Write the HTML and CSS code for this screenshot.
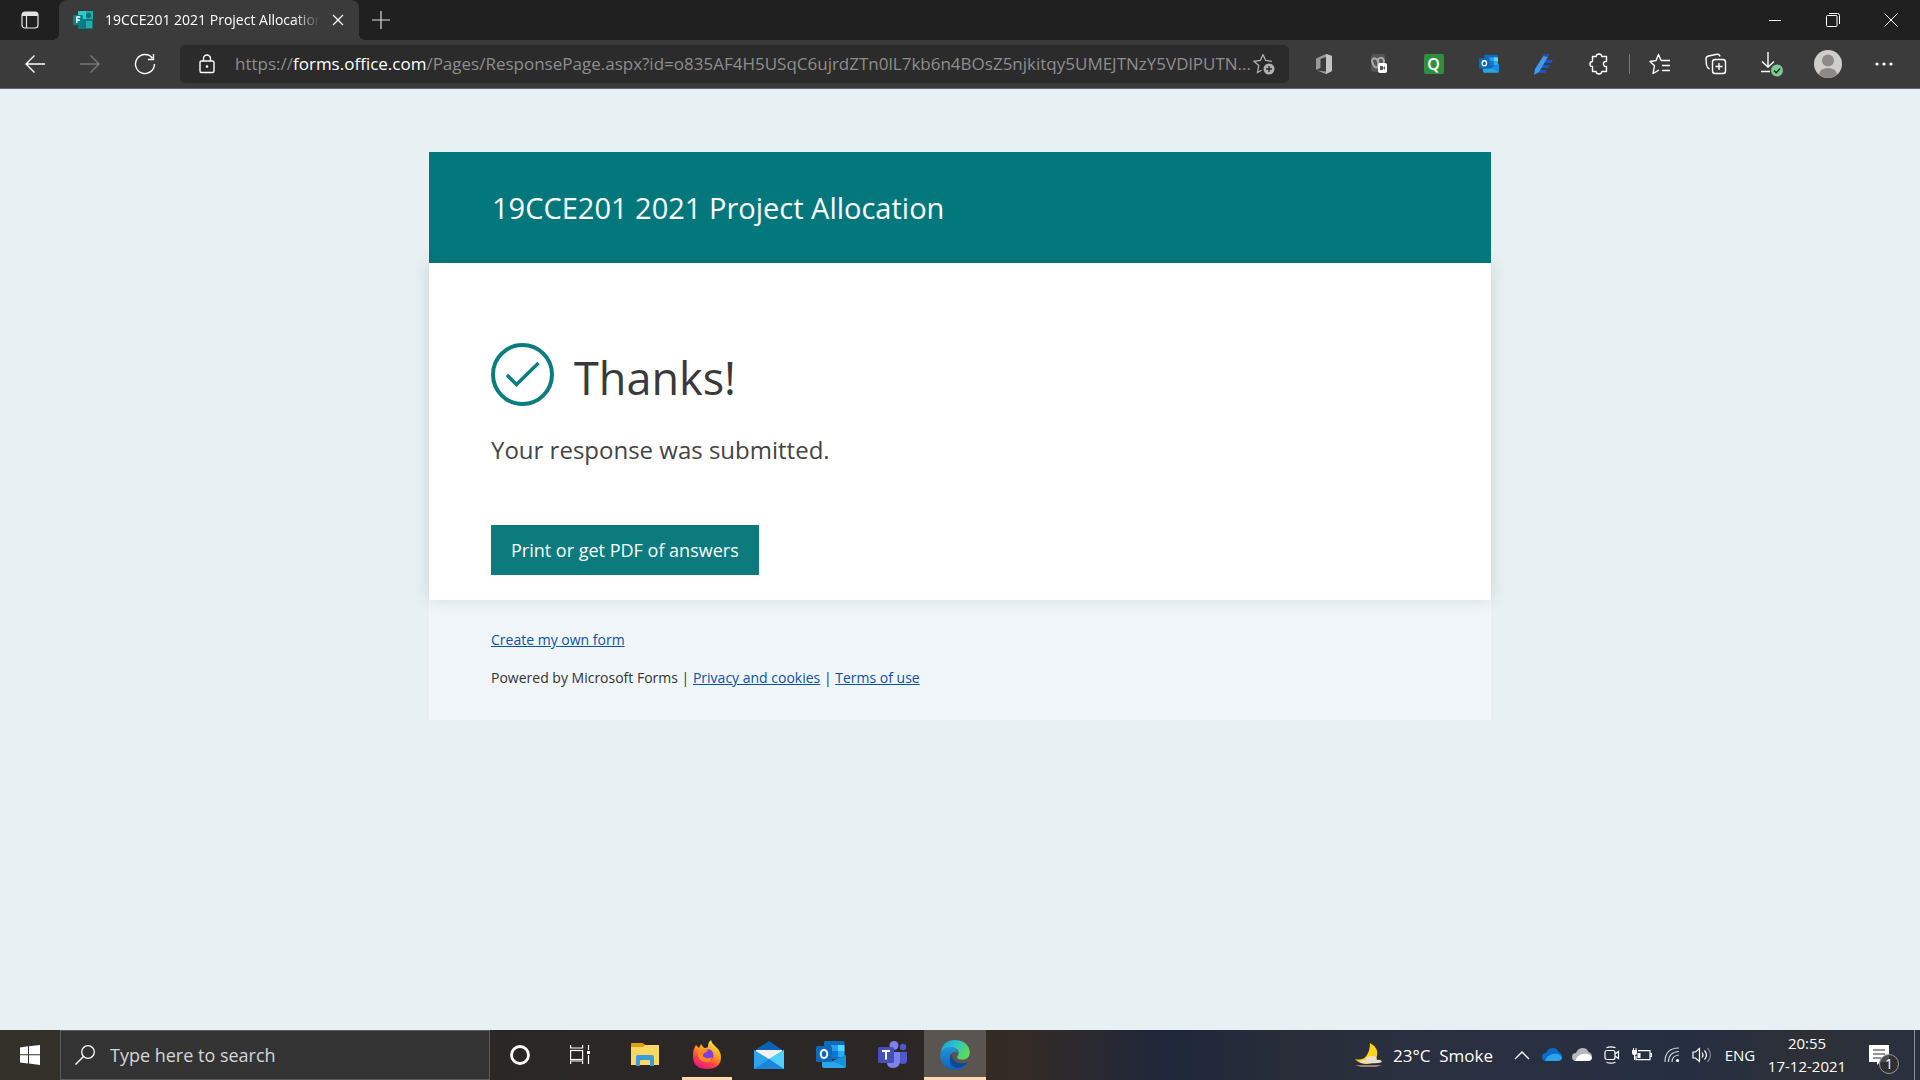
FILE: index.html
```html
<!DOCTYPE html>
<html lang="en">
<head>
<meta charset="utf-8">
<title>19CCE201 2021 Project Allocation</title>
<link rel="stylesheet" href="styles.css">
</head>
<body>
<header class="browser">
  <div class="tabstrip">
    <button class="tab-actions" aria-label="Tab actions">
      <svg width="20" height="20" viewBox="0 0 20 20"><rect x="2" y="2" width="16" height="16" rx="3" fill="none" stroke="#e4e4e4" stroke-width="1.2"/><path d="M2 6V4.500Q2 2 4.500 2h11Q18 2 18 4.500V6z" fill="#e4e4e4"/><path d="M6.500 6v12" stroke="#e4e4e4" stroke-width="1.200"/></svg>
    </button>
    <div class="tab">
      <svg width="20" height="20" viewBox="0 0 20 20"><path d="M5 2q0-1 1-1h14v8H5z" fill="#37c6d0"/><path d="M13 1h7v9h-7z" fill="#1fa8b0"/><circle cx="15.500" cy="5.500" r="2.500" fill="#0b6b70"/><path d="M5 9h15v10H6q-1 0-1-1z" fill="#0a7c80"/><path d="M13 11h6v7h-6z" fill="#29a8b0"/><rect y="5" width="10" height="10" rx="1" fill="#038387"/><path d="M3.800 13V7h3.500M3.800 10h3" stroke="#fff" stroke-width="1.400" fill="none"/></svg>
      <span class="tab-title">19CCE201 2021 Project Allocation</span>
      <button class="tab-close" aria-label="Close tab"><svg width="12" height="12" viewBox="0 0 12 12"><path d="M1 1l10 10M11 1L1 11" stroke="#fff" stroke-width="1.200"/></svg></button>
    </div>
    <button class="new-tab" aria-label="New tab"><svg width="18" height="18" viewBox="0 0 18 18"><path d="M9 0v18M0 9h18" stroke="#ddd" stroke-width="1.200"/></svg></button>
    <div class="window-controls">
      <button aria-label="Minimise"><svg width="14" height="14" viewBox="0 0 14 14"><path d="M1 7.500h12" stroke="#fff"/></svg></button>
      <button aria-label="Restore"><svg width="14" height="14" viewBox="0 0 14 14" fill="none" stroke="#fff"><rect x=".5" y="2.500" width="10.500" height="11" rx="1"/><path d="M3 .5h8.500q2 0 2 2V11"/></svg></button>
      <button aria-label="Close"><svg width="14" height="14" viewBox="0 0 14 14"><path d="M.5.5l13 13M13.500.5l-13 13" stroke="#fff"/></svg></button>
    </div>
  </div>
  <div class="toolbar">
    <div class="nav-buttons">
      <button aria-label="Back"><svg width="22" height="20" viewBox="0 0 22 20"><path d="M21 10H2M10.500 1.500L2 10l8.500 8.500" fill="none" stroke="#fff" stroke-width="1.400"/></svg></button>
      <button aria-label="Forward" disabled><svg width="22" height="20" viewBox="0 0 22 20"><path d="M1 10h19M11.500 1.500L20 10l-8.500 8.500" fill="none" stroke="#777" stroke-width="1.400"/></svg></button>
      <button aria-label="Refresh"><svg width="22" height="22" viewBox="0 0 22 22"><path d="M20.500 11A9.500 9.500 0 1 1 18.500 5.200M19.500 1v5.500H14" fill="none" stroke="#fff" stroke-width="1.400"/></svg></button>
    </div>
    <div class="address">
      <svg width="18" height="20" viewBox="0 0 18 20"><rect x="2" y="7" width="14" height="11.500" rx="1.500" fill="none" stroke="#fff" stroke-width="1.400"/><path d="M5.500 7V4.500a3.500 3.500 0 0 1 7 0V7" fill="none" stroke="#fff" stroke-width="1.400"/><circle cx="9" cy="12.500" r="1.300" fill="#fff"/></svg>
      <div class="url" role="textbox" aria-label="Address bar">https://<span class="host">forms.office.com</span>/Pages/ResponsePage.aspx?id=o835AF4H5USqC6ujrdZTn0lL7kb6n4BOsZ5njkitqy5UMEJTNzY5VDlPUTN...</div>
      <button class="favourite" aria-label="Add to favourites"><svg width="22" height="22" viewBox="0 0 22 22"><path d="M10 1.500l2.700 6 6.300.8M10 1.500l-2.600 6-6.400.8 4.700 4.300-1.200 7 4-2.300" fill="none" stroke="#b0b0b0" stroke-width="1.300"/><circle cx="16" cy="16" r="5.500" fill="#b0b0b0"/><path d="M16 13v6M13 16h6" stroke="#2b2b2b" stroke-width="1.400"/></svg></button>
    </div>
    <div class="extensions">
      <button aria-label="Office"><svg width="18" height="22" viewBox="0 0 18 22"><path d="M1 5.500L11 1l6 2v15l-6 3-9-3.500 9 1V4L5.500 6v9L1 17z" fill="#999"/><path d="M11 1l6 2v15l-6 3z" fill="#c4c4c4"/></svg></button>
      <button aria-label="Extension"><svg width="20" height="20" viewBox="0 0 20 20"><rect x="2" y="0" width="14" height="18" rx="3" fill="#555"/><path d="M3 7q1-4 4-2t2 8q-4 2-6-6zM9 5q5-3 6 2l-2 6q-4-2-4-8z" fill="none" stroke="#aaa" stroke-width="2"/><rect x="9" y="9" width="9" height="10" rx="2" fill="#fff"/><path d="M11 12h3v4h-3zM14 14l2-2v4z" fill="#555"/></svg></button>
      <button class="ext-q" aria-label="Q extension"><span>Q</span></button>
      <button aria-label="Outlook"><svg width="20" height="20" viewBox="0 0 30 28"><use href="#outlook"/></svg></button>
      <button aria-label="Editor"><svg width="20" height="22" viewBox="0 0 20 22"><path d="M9 7h10l-2 3H8zM7 12h9l-2 3H6zM5 17h8l-2 3H4z" fill="#1b55c4"/><path d="M10 2q2-2 5 0L5 19l-5 3 1-6z" fill="#3f9bf0"/><path d="M10 2q2-2 5 0l-1 2-5-1z" fill="#1b4fa8"/></svg></button>
      <button aria-label="Extensions"><svg width="22" height="22" viewBox="0 0 22 22"><path d="M4.500 3.500h3.500Q8.500 1 11 1t3 2.500h4.500v5Q15.500 8 15.500 11t3 2.500v5H14Q13.500 21 11 21t-3-2.500H4.500v-5Q2 13.500 2 11t2.500-2.500z" fill="none" stroke="#fff" stroke-width="1.400" stroke-linejoin="round"/></svg></button>
    </div>
    <div class="browser-actions">
      <button aria-label="Favourites"><svg width="22" height="22" viewBox="0 0 22 22"><path d="M12 7.500L9.500 1.500 7 7.500l-6 1 4.500 4.300L4 20.500l6-3.500M12 7.500h9M13 12.500h8M13 17.500h8" fill="none" stroke="#fff" stroke-width="1.400" stroke-linejoin="round"/></svg></button>
      <button aria-label="Collections"><svg width="22" height="22" viewBox="0 0 22 22"><g fill="none" stroke="#fff" stroke-width="1.400"><rect x="7.500" y="6.500" width="13" height="14" rx="2.500"/><path d="M14 10v7M10.500 13.500h7M4.500 16Q2 15 1.500 12L1 6q0-2.500 2.500-3L12 1.300q2.500-.3 3 2.200"/></g></svg></button>
      <button aria-label="Downloads"><svg width="24" height="26" viewBox="0 0 24 26"><path d="M8 1v15M2 10.500L8 16l6-5.500M1 20.500h9" fill="none" stroke="#fff" stroke-width="1.400"/><circle cx="17" cy="19.500" r="6" fill="#7ccb94"/><path d="M14 19.500l2.200 2.200 4-4.200" fill="none" stroke="#222" stroke-width="1.300"/></svg></button>
      <button aria-label="Profile"><svg width="28" height="28" viewBox="0 0 28 28"><circle cx="14" cy="14" r="14" fill="#d0cecb"/><circle cx="14" cy="10.500" r="6" fill="#8d8986"/><path d="M5 24.500q1-6.500 9-6.500t9 6.500Q19 28 14 28t-9-3.500z" fill="#8d8986"/></svg></button>
      <button aria-label="Settings and more"><svg width="18" height="4" viewBox="0 0 18 4" fill="#fff"><circle cx="2" cy="2" r="1.600"/><circle cx="9" cy="2" r="1.600"/><circle cx="16" cy="2" r="1.600"/></svg></button>
    </div>
  </div>
</header>

<main class="page">
  <section class="form">
    <header class="form-header"><h1>19CCE201 2021 Project Allocation</h1></header>
    <div class="form-body">
      <div class="thanks">
        <svg width="63" height="63" viewBox="0 0 63 63" fill="none" stroke="#0b7c7f"><circle cx="31.500" cy="31.500" r="29.500" stroke-width="4"/><path d="M16 32l9.500 9.500L47.500 20" stroke-width="3.500"/></svg>
        <h2>Thanks!</h2>
      </div>
      <p class="message">Your response was submitted.</p>
      <button class="print">Print or get PDF of answers</button>
    </div>
    <footer class="form-footer">
      <p><a href="#">Create my own form</a></p>
      <p>Powered by Microsoft Forms | <a href="#">Privacy and cookies</a> | <a href="#">Terms of use</a></p>
    </footer>
  </section>
</main>

<footer class="taskbar">
  <button class="start" aria-label="Start"><svg width="20" height="20" viewBox="0 0 20 20" fill="#fff"><path d="M0 2.500L8 1.300V9.300H0zM9 1.200L20 0v9.300H9zM0 10.300h8v8.200L0 17.400zM9 10.300h11V20L9 18.600z"/></svg></button>
  <label class="search">
    <svg width="20" height="20" viewBox="0 0 20 20"><circle cx="13" cy="7" r="6.300" fill="none" stroke="#fff" stroke-width="1.300"/><path d="M8.500 11.500L.5 19.500" stroke="#fff" stroke-width="1.400"/></svg>
    <input type="text" placeholder="Type here to search" aria-label="Type here to search">
  </label>
  <div class="shell-buttons">
    <button aria-label="Cortana"><svg width="20" height="20" viewBox="0 0 20 20"><circle cx="10" cy="10" r="8.500" fill="none" stroke="#fff" stroke-width="2.800"/></svg></button>
    <button aria-label="Task view"><svg width="20" height="20" viewBox="0 0 20 20" fill="none" stroke="#fff" stroke-width="1.200"><rect x=".6" y="5.500" width="12" height="9"/><path d="M.6 0v3h12V0M.6 19v-3h12v3M18.500 0v5M18.500 10v9"/><path d="M17 6h3v3h-3z" fill="#fff" stroke="none"/></svg></button>
  </div>
  <div class="apps">
    <button aria-label="File Explorer"><svg width="28" height="24" viewBox="0 0 28 24"><path d="M0 1q0-1 1-1h11l2 2h13q1 0 1 1v8H0z" fill="#e0a000"/><path d="M0 4h12l2-2h13q1 0 1 1v19H0z" fill="#ffd765"/><path d="M5 23V14q0-2 2-2h14q2 0 2 2v9h-4v-5q0-1-1-1h-8q-1 0-1 1v5z" fill="#3c9ade"/></svg></button>
    <button class="running" aria-label="Firefox"><svg width="30" height="30" viewBox="0 0 30 30"><defs><linearGradient id="fire" x1=".8" y1="0" x2=".3" y2="1"><stop stop-color="#fff14a"/><stop offset=".45" stop-color="#ff9a20"/><stop offset=".75" stop-color="#ff3b4c"/><stop offset="1" stop-color="#e31587"/></linearGradient></defs><path d="M4 5l3 3 2-4 3 4q3 0 4-1 0-5 3-7 1 4 3 5l1 1q6 5 6 11 0 12-14 12Q1 29 1 16 1 9 4 5z" fill="url(#fire)"/><circle cx="15.500" cy="15" r="6" fill="#7f3fe0"/><path d="M5 12q3-3 7-2l4-1q0 3-4 4-3 4 2 5 4 1 6-1-1 6-7 5-7-1-8-10z" fill="#ff8a22"/></svg></button>
    <button aria-label="Mail"><svg width="30" height="28" viewBox="0 0 30 28"><path d="M0 10L15 0l15 10v4H0z" fill="#0b62b4"/><path d="M2 9h26v10H2z" fill="#f2f2f2"/><path d="M0 9l15 9L30 9v19H0z" fill="#2ca5e8"/><path d="M30 9v19L15 18z" fill="#4fd0fb"/><path d="M0 28l15-10 15 10z" fill="#1d86dc"/></svg></button>
    <button aria-label="Outlook"><svg width="30" height="28" viewBox="0 0 30 28"><g id="outlook"><path d="M8 1.500Q8 0 9.500 0H27q1.500 0 1.500 1.500V18H8z" fill="#0f6cbd"/><path d="M15 4h7v6h-7z" fill="#2a9de8"/><path d="M22 4h6.500v6H22z" fill="#50d9ff"/><path d="M15 10h7v6h-7z" fill="#0a78d4"/><path d="M22 10h6.500v6H22z" fill="#29a9ee"/><path d="M6 15l12 6 12-6v10q0 2-2 2H8q-2 0-2-2z" fill="#28a8ea"/><path d="M30 14v12L16 20z" fill="#1490df"/><rect y="5" width="16" height="16" rx="1.500" fill="#0f67b8"/><ellipse cx="8" cy="13" rx="3.300" ry="3.900" fill="none" stroke="#fff" stroke-width="2"/></g></svg></button>
    <button aria-label="Teams"><svg width="30" height="28" viewBox="0 0 30 28"><circle cx="25" cy="6" r="3.200" fill="#5059c9"/><path d="M20 11h9v8q0 4-4 4t-5-4z" fill="#5059c9"/><circle cx="16" cy="4.500" r="4.500" fill="#7b83eb"/><path d="M9 11h13v9q0 7-7 7t-6-7z" fill="#7b83eb"/><rect y="6" width="16" height="16" rx="1.500" fill="#454fb8"/><path d="M4 10h8M8 10v8.500" stroke="#fff" stroke-width="2"/></svg></button>
    <button class="active" aria-label="Microsoft Edge"><svg width="30" height="30" viewBox="0 0 30 30"><defs><linearGradient id="wave" x1="0" y1=".2" x2="1" y2=".6"><stop stop-color="#1aa3de"/><stop offset=".5" stop-color="#2fc6c4"/><stop offset="1" stop-color="#62dd4c"/></linearGradient><linearGradient id="sea" x1="0" y1="0" x2="0" y2="1"><stop stop-color="#2195dc"/><stop offset="1" stop-color="#0f62b8"/></linearGradient></defs><path d="M1 12Q3 0 15 0q9 0 13.500 7 3 7-1 11-4 3-9 1-2-1-1-3 3-4-1-7Q10 5 1 12z" fill="url(#wave)"/><path d="M0 15Q2 7 10 7q7 0 8 6-5-3-8 2-2 6 4 9 6 3 14-2-4 8-13 8Q1 29 0 15z" fill="url(#sea)"/><path d="M11 14q-4 12 6 14 6 0 11-6-14 5-17-8z" fill="#0b4a96"/></svg></button>
  </div>
  <div class="tray">
    <button class="weather"><svg width="30" height="26" viewBox="0 0 30 26"><path d="M16 1q9 5 7 13-2 9-12 8-7-1-10-5 8 2 12-4 3-5 3-12z" fill="#ffd21c"/><path d="M6 21q1-4 5-3 2-4 7-4 5 0 5 4 4-1 5 2-3 2-22 1z" fill="#eadfce"/><path d="M1 23h27l-6 2H7z" fill="#9a8170"/></svg><span>23°C&nbsp; Smoke</span></button>
    <div class="tray-icons">
      <button aria-label="Show hidden icons"><svg width="16" height="10" viewBox="0 0 16 10"><path d="M1 9l7-7 7 7" fill="none" stroke="#fff" stroke-width="1.400"/></svg></button>
      <button aria-label="OneDrive work"><svg width="20" height="14" viewBox="0 0 20 14"><path d="M4 5q2-5 7-5 4 0 5.500 4Q20 5 20 9t-4 4H4Q0 13 0 9t4-4z" fill="#0a6cc8"/><path d="M3 13q2-6 8-7 7-1 9 4-1 3-4 3z" fill="#2aa5ea"/></svg></button>
      <button aria-label="OneDrive"><svg width="20" height="14" viewBox="0 0 20 14"><path d="M4 5q2-5 7-5 4 0 5.500 4Q20 5 20 9t-4 4H4Q0 13 0 9t4-4z" fill="#b5b7bb"/><path d="M3 13q2-6 8-7 7-1 9 4-1 3-4 3z" fill="#fff"/></svg></button>
      <button aria-label="Meet Now"><svg width="16" height="18" viewBox="0 0 16 18" fill="none" stroke="#fff" stroke-width="1.200"><rect x="1" y="4.500" width="10" height="9" rx="2"/><path d="M11 8l3.500-2.500v7L11 10M2.500 1.800q4.500-2 9 0M2.500 16.200q4.500 2 9 0"/></svg></button>
      <button aria-label="Battery"><svg width="20" height="14" viewBox="0 0 20 14"><path d="M6 2.600h12v9H4V8M18.500 5.500h1v3h-1" fill="none" stroke="#fff" stroke-width="1.200"/><path d="M5.500 5h3v5h-3zM0 2h5v3q0 2-2 2H2Q0 7 0 5zM1 0h1v2H1zM3.500 0h1v2h-1zM2 7h1.200v5H2z" fill="#fff"/></svg></button>
      <button aria-label="Wi-Fi"><svg width="16" height="16" viewBox="0 0 16 16" fill="none" stroke="#ccd0d6" stroke-width="1.200"><path d="M1 15Q1 1 15 1M4.500 15q0-10 10.500-10.500M8 15q0-6.500 7-7"/><circle cx="13.500" cy="13.500" r="1.600" fill="#fff" stroke="none"/></svg></button>
      <button aria-label="Volume"><svg width="20" height="18" viewBox="0 0 20 18" fill="none" stroke="#fff" stroke-width="1.200"><path d="M1 6h2.500L7.500 2.500v13L3.500 12H1zM10 6.500q2 2.500 0 5M12.500 4.500q4 4.500 0 9"/><path d="M15.500 2q6 7 0 14" stroke="#7c828e"/></svg></button>
    </div>
    <button class="lang">ENG</button>
    <button class="clock"><span>20:55</span><span>17-12-2021</span></button>
    <button class="notifications" aria-label="1 new notification"><svg width="20" height="20" viewBox="0 0 20 20"><path d="M0 0h20v17h-9l-3 3v-3H0z" fill="#fff"/><path d="M4 5h12M4 9h12M4 13h8" stroke="#2a3040" stroke-width="1.200"/></svg><span class="badge">1</span></button>
    <button class="show-desktop" aria-label="Show desktop"></button>
  </div>
</footer>
</body>
</html>
```
FILE: styles.css
```css
* { box-sizing: border-box; }
body {
  margin: 0;
  min-height: 100vh;
  display: flex;
  flex-direction: column;
  font-family: "Open Sans", "Noto Sans", sans-serif;
  background: #e7f0f3;
}
h1, h2, p { margin: 0; font-weight: 400; }
button {
  display: flex;
  align-items: center;
  justify-content: center;
  padding: 0;
  border: 0;
  background: none;
  color: #fff;
  font: inherit;
}
svg { display: block; flex: none; }

/* Browser window */
.tabstrip { display: flex; height: 40px; background: #202020; }
.tab-actions { width: 59px; }
.tab {
  position: relative;
  display: flex;
  align-items: center;
  width: 300px;
  padding: 0 15px 0 14px;
  border-radius: 8px 8px 0 0;
  background: #3b3b3b;
}
.tab::before, .tab::after {
  content: "";
  position: absolute;
  bottom: 0;
  width: 6px;
  height: 6px;
}
.tab::before { left: -6px; background: radial-gradient(circle at 0 0, #202020 6px, #3b3b3b 6px); }
.tab::after { right: -6px; background: radial-gradient(circle at 100% 0, #202020 6px, #3b3b3b 6px); }
.tab-title {
  flex: 1;
  margin: 0 12px;
  padding-bottom: 2px;
  overflow: hidden;
  white-space: nowrap;
  color: #fff;
  font-size: 14px;
  mask-image: linear-gradient(to right, #000 88%, transparent);
}
.tab-close { width: 12px; }
.new-tab { width: 44px; }
.window-controls { display: flex; margin-left: auto; }
.window-controls button { width: 58px; }
.toolbar {
  display: flex;
  align-items: center;
  height: 49px;
  padding: 0 8px 0 7px;
  border-bottom: 1px solid #666;
  background: #3b3b3b;
}
.nav-buttons, .extensions, .browser-actions { display: flex; }
.nav-buttons button, .extensions button { width: 55px; height: 38px; }
.address {
  flex: 1;
  min-width: 0;
  display: flex;
  align-items: center;
  height: 38px;
  margin: 0 7px 0 8px;
  padding: 0 14px 0 18px;
  border-radius: 5px;
  background: #2b2b2b;
}
.url {
  flex: 1;
  min-width: 0;
  margin-left: 19px;
  padding-bottom: 2px;
  overflow: hidden;
  white-space: nowrap;
  color: #8e8e8e;
  font-size: 17px;
}
.host { color: #fff; }
.ext-q span {
  width: 20px;
  height: 20px;
  background: #2f8f3f;
  border-radius: 2px;
  font-size: 16px;
  line-height: 20px;
  font-weight: 600;
}
.browser-actions { margin-left: 3px; padding-left: 3px; position: relative; }
.browser-actions::before {
  content: "";
  position: absolute;
  left: 0;
  top: 9px;
  width: 1px;
  height: 20px;
  background: #777;
}
.browser-actions button { width: 56px; height: 38px; }

/* Form page */
.page { flex: 1; padding: 63px 24px; }
.form { max-width: 1062px; margin: 0 auto; }
.form-header {
  padding: 36px 63px;
  background: #03787c;
  color: #fff;
}
.form-header h1 { font-size: 29px; line-height: 39px; }
.form-body {
  position: relative;
  padding: 80px 62px 25px;
  background: #fff;
  box-shadow: 0 0 16px rgba(0, 40, 30, 0.12);
}
.thanks { display: flex; align-items: center; gap: 20px; height: 63px; }
.thanks h2 { padding-top: 6px; color: #393939; font-size: 45px; line-height: 60px; }
.message { margin-top: 28px; color: #444; font-size: 24px; line-height: 32px; }
.print {
  height: 50px;
  margin-top: 59px;
  padding: 0 20px;
  background: #0b7b7e;
  font-size: 18px;
}
.form-footer {
  display: flex;
  flex-direction: column;
  gap: 16px;
  padding: 29px 62px 31px;
  background: #f0f6f9;
  color: #333;
  font-size: 14px;
  line-height: 22px;
}
.form-footer a { color: #0b51a5; }

/* Taskbar */
.taskbar {
  display: flex;
  height: 50px;
  color: #fff;
  background: linear-gradient(to right, #34312a 0, #2a2827 26%, #2c2725 47%, #332b25 53%, #1f273c 61%, #282d38 67%, #2a3040 75%, #262e42 88%, #2d3036 94%, #29303f 100%);
}
.start { width: 60px; }
.search {
  display: flex;
  align-items: center;
  gap: 15px;
  width: 430px;
  padding: 0 14px;
  border: 1px solid #5c5c5c;
  background: #333;
}
.search input {
  flex: 1;
  min-width: 0;
  padding: 0;
  border: 0;
  background: none;
  color: #fff;
  font: inherit;
  font-size: 18px;
}
.search input::placeholder { color: #d6d6d6; }
.shell-buttons, .apps, .tray, .tray-icons { display: flex; }
.shell-buttons button { width: 60px; }
.apps { margin-left: 4px; }
.apps button { width: 62px; position: relative; }
.running::after, .active::after {
  content: "";
  position: absolute;
  left: 6px;
  right: 6px;
  bottom: 0;
  height: 3px;
  background: #ffd8ae;
}
.apps .active { background: #5b5551; }
.active::after { left: 0; right: 0; }
.tray { margin-left: auto; }
.weather { gap: 9px; margin-right: 14px; font-size: 17px; }
.tray-icons button { width: 30px; }
.lang { width: 46px; font-size: 15px; }
.clock { flex-direction: column; width: 84px; margin: 0 12px 0 2px; font-size: 15px; line-height: 23px; }
.notifications { position: relative; width: 53px; padding-right: 18px; }
.badge {
  position: absolute;
  left: 18px;
  top: 24px;
  width: 20px;
  height: 20px;
  border: 1px solid #999;
  border-radius: 50%;
  background: rgba(48, 48, 48, 0.85);
  font-size: 14px;
  line-height: 18px;
  text-align: center;
}
.show-desktop { width: 6px; border-left: 1px solid #8a8f99; }
```
